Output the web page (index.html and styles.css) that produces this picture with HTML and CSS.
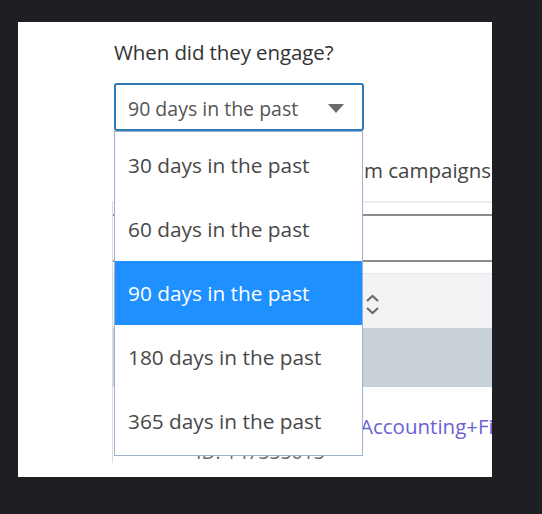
FILE: index.html
```html
<!DOCTYPE html>
<html lang="en">
<head>
<meta charset="UTF-8" />
<meta name="viewport" content="width=device-width, initial-scale=1" />
<title>Engagement filter</title>
<link rel="stylesheet" href="styles.css">
</head>
<body>

<div class="panel">
  <div class="field">
    <div class="field-label">When did they engage?</div>
    <div class="select-wrap">
      <div class="select">
        <span>90 days in the past</span>
        <svg class="caret" width="16" height="9" viewBox="0 0 16 9"><path d="M0 0h16L8 9z" fill="#6b6b6b"/></svg>
      </div>
      <ul class="options">
        <li>30 days in the past</li>
        <li>60 days in the past</li>
        <li class="active">90 days in the past</li>
        <li>180 days in the past</li>
        <li>365 days in the past</li>
      </ul>
    </div>
  </div>

  <!-- lo que queda a la derecha del desplegable -->
  <div class="note"><span>m campaigns</span></div>

  <div class="table">
    <div class="filter"><div class="filter-input"></div></div>
    <div class="thead">
      <svg class="sort" width="15" height="21" viewBox="0 0 15 21"><path d="M2 7l5.5-5 5.5 5M2 14l5.5 5 5.5-5" fill="none" stroke="#6b6b6b" stroke-width="2.2"/></svg>
    </div>
    <div class="group-row"></div>
    <div class="row">
      <a class="name" href="#">Accounting+Finance</a>
      <div class="id-clip"><div class="id">ID: 147333013</div></div>
    </div>
  </div>
</div>

</body>
</html>
```

FILE: styles.css
```css
body { margin: 0; background: #1e1f22; font-family: "Open Sans", "Noto Sans", sans-serif; color: #3d3d3d; }

.panel {
  margin: 22px 0 0 18px;
  width: 474px;
  height: 455px;
  background: #fff;
  overflow: hidden;
  padding-left: 94px;
  box-sizing: border-box;
}

.field { padding: 16px 0 0 2px; }
.field-label { font-size: 20.5px; line-height: 28px; color: #333; letter-spacing: -0.1px; }

.select-wrap { position: relative; width: 250px; margin-top: 17px; }
.select {
  height: 48px;
  border: 2px solid #2d7ab6;
  border-radius: 3px;
  box-sizing: border-box;
  display: flex;
  align-items: center;
  justify-content: space-between;
  padding: 2px 18px 0 12px;
  font-size: 19.5px;
  color: #555;
}

/* lista desplegada */
.options {
  position: absolute;
  top: 100%;
  left: 0;
  right: 1px;
  margin: 0;
  padding: 1px 0 2px 0;
  list-style: none;
  background: #fff;
  border: 1px solid #9fb1cf;
  z-index: 2;
  font-size: 20.8px;
}
.options li { height: 64px; line-height: 64px; padding-left: 13px; color: #484848; }
.options li.active { background: #1e90ff; color: #fff; }

.note {
  margin: 24px 0 0 252px;
  height: 30px;
  line-height: 30px;
  font-size: 20.5px;
  white-space: nowrap;
  color: #444;
}

.table {
  margin-top: 16px;
  border-top: 2px solid #ececec;
  border-left: 1px solid #dcdcdc;
}
.filter { padding: 11px 0 11px 0; }
.filter-input { height: 44px; border-top: 2px solid #8c8c8c; border-bottom: 2px solid #8c8c8c; }

.thead {
  height: 54px;
  background: #f2f3f5;
  border-top: 1px solid #e6e8eb;
  display: flex;
  align-items: center;
  padding-left: 252px;
}
.sort { margin-top: 6px; }

.group-row { height: 59px; background: #c9d1d8; }

.row { padding: 25px 0 0 247px; white-space: nowrap; }
.name { display: block; font-size: 20.5px; line-height: 28px; color: #6b62d4; text-decoration: none; }

/* solo se ve el pie del ID bajo el desplegable */
.id-clip { height: 9px; overflow: hidden; margin: 14px 0 0 -164px; }
.id { font-size: 19.3px; line-height: 24px; color: #6a6a6a; margin-top: -14px; }
```
